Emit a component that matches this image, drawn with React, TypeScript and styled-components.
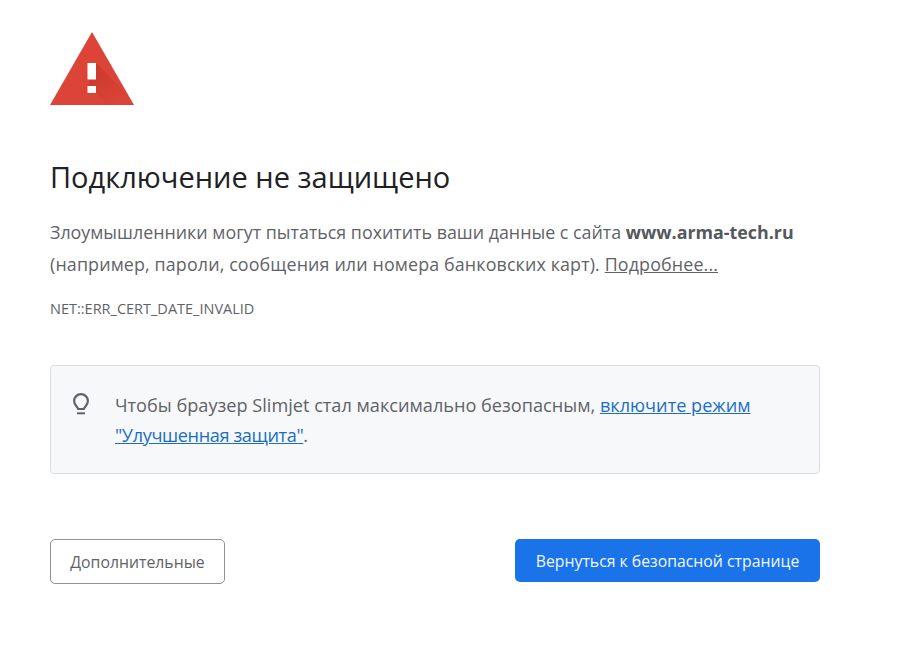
import styled, { createGlobalStyle } from "styled-components";

const GlobalStyle = createGlobalStyle`
  html, body {
    margin: 0;
    background: #fff;
    font-family: "Open Sans", "Noto Sans", sans-serif;
  }
`;

const Page = styled.main`
  width: 820px;
  height: 653px;
  box-sizing: border-box;
  padding: 32px 0 0 50px;
`;

const WarningIcon = styled.svg`
  display: block;
  width: 84px;
  height: 73px;
`;

const Title = styled.h1`
  margin: 53px 0 0;
  font-size: 29px;
  line-height: 38px;
  font-weight: 400;
  color: #202124;
`;

const Message = styled.p`
  margin: 20px 0 0;
  font-size: 17.85px;
  line-height: 32px;
  white-space: nowrap;
  color: #5f6368;

  strong {
    font-weight: 700;
    color: #55585c;
  }
`;

const SecondLine = styled.span`
  letter-spacing: 0.14px;
`;

const PlainLink = styled.a`
  color: #5f6368;
  text-decoration: underline;
`;

const ErrorCode = styled.div`
  margin-top: 19px;
  font-size: 14.5px;
  line-height: 20px;
  color: #5f6368;
`;

const Promo = styled.section`
  margin-top: 46px;
  box-sizing: border-box;
  height: 109px;
  display: flex;
  gap: 25px;
  padding: 24px 20px 0 21px;
  background: #f7f8fa;
  border: 1px solid #dadce0;
  border-radius: 4px;
`;

const BulbIcon = styled.svg`
  flex: none;
  width: 18px;
  height: 26px;
  color: #5f6368;
`;

const PromoText = styled.p`
  margin: 0;
  font-size: 18.15px;
  line-height: 30px;
  white-space: nowrap;
  color: #5f6368;
`;

const BlueLink = styled.a<{ $tight?: boolean }>`
  color: #1a6fc4;
  text-decoration: underline;
  letter-spacing: ${(p) => (p.$tight ? "-0.38px" : "0")};
`;

const Actions = styled.div`
  margin-top: 65px;
  display: flex;
  justify-content: space-between;
`;

const Button = styled.button<{ $primary?: boolean }>`
  box-sizing: border-box;
  height: ${(p) => (p.$primary ? 43 : 45)}px;
  width: ${(p) => (p.$primary ? 305 : 175)}px;
  padding: 0;
  border-radius: 5px;
  font-family: inherit;
  font-size: 15.8px;
  border: ${(p) => (p.$primary ? "none" : "1px solid #8f9296")};
  background: ${(p) => (p.$primary ? "#1a73e8" : "#fff")};
  color: ${(p) => (p.$primary ? "#f2f7fe" : "#5f6368")};
`;

export default function App() {
  return (
    <>
      <GlobalStyle />
      <Page>
        <WarningIcon viewBox="0 0 84 73" aria-hidden="true">
          <defs>
            <linearGradient id="markShadow" x1="0.2" y1="0.1" x2="0.8" y2="0.85">
              <stop offset="0" stopColor="#a52714" stopOpacity="0.32" />
              <stop offset="1" stopColor="#a52714" stopOpacity="0" />
            </linearGradient>
          </defs>
          <path d="M42 0 84 73H0Z" fill="#dc4437" />
          <path d="M46 31 78.4 63.4 84 73H58L38 54Z" fill="url(#markShadow)" />
          <rect x="37.5" y="31" width="8.5" height="16.5" fill="#fff" />
          <rect x="37.5" y="54" width="8.5" height="7" fill="#fff" />
        </WarningIcon>
        <Title>Подключение не защищено</Title>
        <Message>
          Злоумышленники могут пытаться похитить ваши данные с сайта <strong>www.arma-tech.ru</strong>
          <br />
          <SecondLine>
            (например, пароли, сообщения или номера банковских карт). <PlainLink href="#">Подробнее...</PlainLink>
          </SecondLine>
        </Message>
        <ErrorCode>NET::ERR_CERT_DATE_INVALID</ErrorCode>
        <Promo>
          <BulbIcon viewBox="0 0 18 26" fill="none" stroke="currentColor" aria-hidden="true">
            <path
              d="M6 19c0-2.2-3.9-3.4-3.9-8a6.9 6.9 0 0 1 13.8 0c0 4.6-3.9 5.8-3.9 8Z"
              strokeWidth="2.2"
              strokeLinejoin="round"
            />
            <path d="M5 23.3h8" strokeWidth="2" />
          </BulbIcon>
          <PromoText>
            Чтобы браузер Slimjet стал максимально безопасным, <BlueLink href="#">включите режим</BlueLink>
            <br />
            <BlueLink href="#" $tight>"Улучшенная защита"</BlueLink>.
          </PromoText>
        </Promo>
        <Actions>
          <Button>Дополнительные</Button>
          <Button $primary>Вернуться к безопасной странице</Button>
        </Actions>
      </Page>
    </>
  );
}
